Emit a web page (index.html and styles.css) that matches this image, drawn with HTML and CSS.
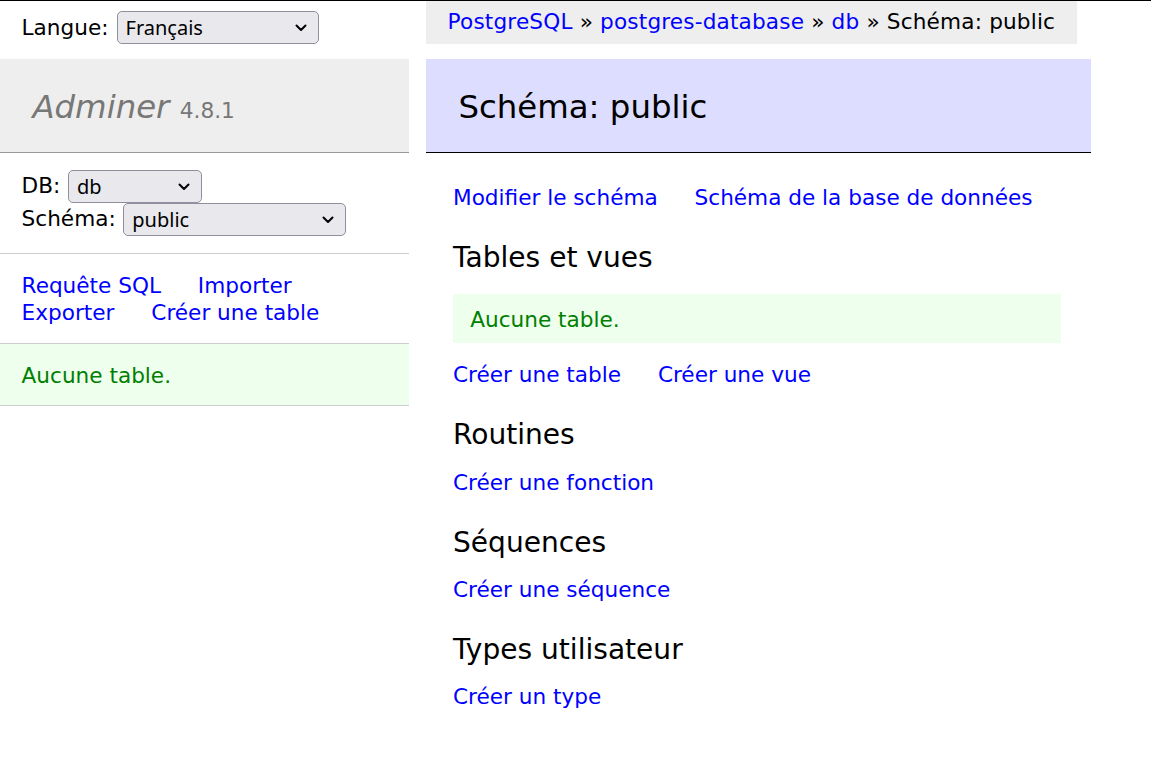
FILE: index.html
```html
<!DOCTYPE html>
<html lang="fr">
<head>
<meta charset="utf-8">
<title>Schéma: public - Adminer</title>
<link rel="stylesheet" href="styles.css">
</head>
<body>
<div class="topline"></div>
<div class="page">
  <form class="lang">
    <span>Langue:</span>
    <span class="select-wrap select-lang">
      <select><option>Français</option></select>
      <svg class="chevron" viewBox="0 0 12 8" width="12" height="8"><polyline points="1.5,1.5 6,6 10.5,1.5" fill="none" stroke="#000" stroke-width="2" stroke-linecap="round" stroke-linejoin="round"/></svg>
    </span>
  </form>

  <div class="breadcrumb"><a href="#">PostgreSQL</a> » <a href="#">postgres-database</a> » <a href="#">db</a> » Schéma: public</div>

  <nav class="menu">
    <h1><a class="brand" href="#">Adminer</a> <span class="version">4.8.1</span></h1>
    <div class="dbs">
      <div class="dbrow">
        <span>DB:</span>
        <span class="select-wrap select-db">
          <select><option>db</option></select>
          <svg class="chevron" viewBox="0 0 12 8" width="12" height="8"><polyline points="1.5,1.5 6,6 10.5,1.5" fill="none" stroke="#000" stroke-width="2" stroke-linecap="round" stroke-linejoin="round"/></svg>
        </span>
      </div>
      <div class="dbrow">
        <span>Schéma:</span>
        <span class="select-wrap select-schema">
          <select><option>public</option></select>
          <svg class="chevron" viewBox="0 0 12 8" width="12" height="8"><polyline points="1.5,1.5 6,6 10.5,1.5" fill="none" stroke="#000" stroke-width="2" stroke-linecap="round" stroke-linejoin="round"/></svg>
        </span>
      </div>
    </div>
    <p class="menu-links"><a href="#">Requête SQL</a> <a href="#">Importer</a> <a href="#">Exporter</a> <a href="#">Créer une table</a></p>
    <p class="menu-tables">Aucune table.</p>
  </nav>

  <main class="content">
    <h2>Schéma: public</h2>
    <div class="body">
      <p class="links first"><a href="#">Modifier le schéma</a> <a href="#">Schéma de la base de données</a></p>
      <h3>Tables et vues</h3>
      <p class="message">Aucune table.</p>
      <p class="links"><a href="#">Créer une table</a> <a href="#">Créer une vue</a></p>
      <h3>Routines</h3>
      <p class="links"><a href="#">Créer une fonction</a></p>
      <h3>Séquences</h3>
      <p class="links"><a href="#">Créer une séquence</a></p>
      <h3>Types utilisateur</h3>
      <p class="links"><a href="#">Créer un type</a></p>
    </div>
  </main>
</div>
</body>
</html>
```

FILE: styles.css
```css
html, body {
  margin: 0;
  padding: 0;
  background: #fff;
}

body {
  color: #000;
  font-family: "DejaVu Sans", Verdana, sans-serif;
  font-size: 21.6px;
  line-height: 1.25;
}

a {
  color: #00f;
  text-decoration: none;
}

.topline {
  height: 1px;
  background: #000;
}

.page {
  display: grid;
  grid-template-columns: 409px 665px;
  grid-template-rows: 43.2px auto;
  column-gap: 17px;
  row-gap: 15px;
  width: 1091px;
}

/* language selector */
.lang {
  margin: 0;
  padding: 7.5px 21.6px 0;
  height: 38.9px;
  display: flex;
  align-items: center;
  gap: 8px;
}

.lang > span:first-child {
  padding-top: 2px;
}

.select-wrap {
  position: relative;
  display: inline-block;
  height: 33px;
}

.select-wrap select {
  appearance: none;
  -webkit-appearance: none;
  box-sizing: border-box;
  height: 33px;
  margin: 0;
  padding: 0 30px 0 8px;
  border: 1px solid #8f8f9d;
  border-radius: 5px;
  background: #e9e9ed;
  color: #000;
  font-family: "Noto Sans", "Open Sans", sans-serif;
  font-size: 20px;
  line-height: 31px;
}

.select-lang select { width: 202px; }
.select-db select { width: 134px; }
.select-schema select { width: 223px; }

.chevron {
  position: absolute;
  right: 12px;
  top: 13px;
  width: 12px;
  height: 8px;
  pointer-events: none;
}

/* breadcrumb */
.breadcrumb {
  justify-self: start;
  background: #eee;
  height: 43.2px;
  line-height: 42px;
  padding: 0 21.6px;
  white-space: nowrap;
  letter-spacing: 0.17px;
}

/* left menu */
.menu {
  display: flex;
  flex-direction: column;
}

.menu h1 {
  margin: 0;
  font-size: 32.4px;
  line-height: 40.5px;
  height: 40.5px;
  font-weight: normal;
  padding: 27.92px 32.4px 23.92px;
  background: #eee;
  color: #777;
  border-bottom: 1px solid #999;
  white-space: nowrap;
}

.brand {
  color: #777;
  font-style: italic;
}

.version {
  color: #777;
  font-size: 67%;
  line-height: 1;
}

.dbs {
  padding: 17.28px 21.6px;
  border-bottom: 1px solid #ccc;
  display: flex;
  flex-direction: column;
}

.dbrow {
  display: flex;
  align-items: center;
  gap: 7.6px;
  height: 33px;
}

.dbrow > span:first-child {
  padding-top: 1px;
}

.menu-links {
  margin: 0;
  padding: 19.28px 21.6px 15.28px;
  border-bottom: 1px solid #ccc;
}

.menu-links a {
  margin-right: 30px;
}

.menu-tables {
  margin: 0;
  padding: 19.28px 21.6px 15.28px;
  border-bottom: 1px solid #ccc;
  background: #efe;
  color: green;
}

/* content */
.content {
  padding-bottom: 30px;
}

.content h2 {
  margin: 0 0 30px 0;
  font-size: 32.4px;
  line-height: 40.5px;
  font-weight: normal;
  padding: 27.92px 32.4px 23.92px;
  background: #ddf;
  border-bottom: 1px solid #000;
}

.body {
  padding-left: 27px;
}

.links {
  margin: 17.28px 30px -2px 0;
  padding-top: 2px;
}

.links.first {
  margin-top: 0;
  white-space: nowrap;
}

.links a {
  margin-right: 30px;
}

.links a:last-child {
  margin-right: 0;
}

.body h3 {
  margin: 28.08px 0 -2px;
  padding-top: 2px;
  font-size: 28.08px;
  line-height: 35.1px;
  font-weight: normal;
}

.message {
  margin: 21.6px 30px 0 0;
  padding: 12.8px 17.28px 8.8px;
  background: #efe;
  color: green;
}
```
